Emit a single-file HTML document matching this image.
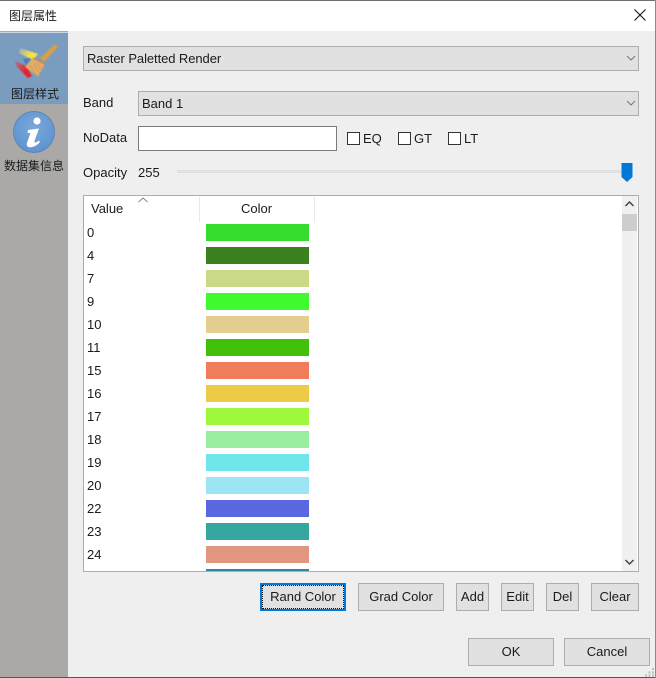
<!DOCTYPE html>
<html><head><meta charset="utf-8"><style>
*{box-sizing:border-box}
html,body{margin:0;padding:0}
body{width:656px;height:678px;position:relative;overflow:hidden;background:#efefef;font-family:"Liberation Sans","Noto Sans CJK SC",sans-serif;font-size:13px;color:#1a1a1a}
.a{position:absolute}
.t{position:absolute;white-space:nowrap;line-height:16px}
.z{font-size:12px}
.cb{position:absolute;background:#e1e1e1;border:1px solid #adadad}
.btn{position:absolute;background:#e1e1e1;border:1px solid #adadad;text-align:center;line-height:26px;top:583px;height:28px}
.chk{position:absolute;width:13px;height:13px;border:1px solid #333;background:#fff;top:132px}
.sw{position:absolute;left:206px;width:103px;height:17px}
.v{position:absolute;left:87px;line-height:16px}
</style></head><body>
<div class="a" style="left:0;top:0;width:656px;height:31px;background:#fff"></div>
<div class="a" style="left:0;top:0;width:656px;height:1px;background:#707070"></div>
<div class="t z" style="left:9px;top:8px">图层属性</div>
<svg class="a" style="left:633px;top:8px" width="14" height="14" viewBox="0 0 14 14"><path d="M1.500 1.500L12.500 12.500M12.500 1.500L1.500 12.500" stroke="#111" stroke-width="1.100" fill="none"/></svg>

<div class="a" style="left:0;top:31px;width:68px;height:647px;background:#aaa9a8"></div>
<div class="a" style="left:0;top:32px;width:68px;height:72px;background:#7a9dbf;border-top:1px solid #c9d6e2"></div>
<svg class="a" style="left:12px;top:40px;filter:blur(.4px)" width="48" height="42" viewBox="0 0 48 42">
<defs><linearGradient id="y" x1="0" y1="0" x2="1" y2="0.5"><stop offset="0" stop-color="#e8e2a0" stop-opacity=".2"/><stop offset=".7" stop-color="#f6e33c"/></linearGradient><linearGradient id="r" x1="0" y1="0" x2="1" y2="0.7"><stop offset="0" stop-color="#e03a3a" stop-opacity=".4"/><stop offset=".7" stop-color="#e8222a"/></linearGradient></defs>
<path d="M8 8L26 14L21 20L7 13Z" fill="url(#y)"/>
<path d="M3 21L14 26L20 36L16 38L5 27Z" fill="url(#r)"/>
<path d="M11 19L19 18L14 25Z" fill="#4a78c4"/>
<path d="M28 18L43 4L46 7L32 22Z" fill="#d6a04a"/>
<path d="M21 18L33 24L26 36.500L13 27Z" fill="#e5ab68"/>
<path d="M21 18L33 24" stroke="#bd8a4c" stroke-width="1.400" fill="none"/>
<path d="M18 25L24 35M22 23L27 33M26 23L29 30" stroke="#cf9558" stroke-width=".8" fill="none"/>
</svg>
<div class="t z" style="left:11px;top:86px">图层样式</div>
<svg class="a" style="left:12px;top:110px" width="44" height="44" viewBox="0 0 44 44">
<defs><radialGradient id="b" cx=".5" cy=".4" r=".6"><stop offset="0" stop-color="#7aa8dc"/><stop offset="1" stop-color="#5f93cf"/></radialGradient></defs>
<circle cx="22" cy="22" r="20.500" fill="url(#b)" stroke="#5c86b6" stroke-width="1"/>
<circle cx="25" cy="11" r="3.600" fill="#fff"/>
<path d="M16 20L27 18.500L22.500 31C22 33 24 33 27 30.500L28 32C24.500 36 20 38 16.500 37C14.500 36.300 14.500 34 15.300 32L18.500 23L15.500 23Z" fill="#fff"/>
</svg>
<div class="t z" style="left:4px;top:158px">数据集信息</div>

<div class="cb" style="left:83px;top:46px;width:556px;height:25px"></div>
<div class="t" style="left:87px;top:51px;letter-spacing:-.08px">Raster Paletted Render</div>
<svg class="a" style="left:626px;top:55px" width="10" height="7" viewBox="0 0 10 7"><path d="M1 1L5 5L9 1" stroke="#777" fill="none"/></svg>

<div class="t" style="left:83px;top:95px">Band</div>
<div class="cb" style="left:138px;top:91px;width:501px;height:25px"></div>
<div class="t" style="left:142px;top:96px">Band 1</div>
<svg class="a" style="left:626px;top:100px" width="10" height="7" viewBox="0 0 10 7"><path d="M1 1L5 5L9 1" stroke="#777" fill="none"/></svg>

<div class="t" style="left:83px;top:130px">NoData</div>
<div class="a" style="left:138px;top:126px;width:199px;height:25px;background:#fff;border:1px solid #7a7a7a"></div>
<div class="chk" style="left:347px"></div><div class="t" style="left:363px;top:131px">EQ</div>
<div class="chk" style="left:398px"></div><div class="t" style="left:414px;top:131px">GT</div>
<div class="chk" style="left:448px"></div><div class="t" style="left:464px;top:131px">LT</div>

<div class="t" style="left:83px;top:165px">Opacity</div>
<div class="t" style="left:138px;top:165px">255</div>
<div class="a" style="left:177px;top:170px;width:449px;height:3px;background:#e6e6e6;border:1px solid #dedede"></div>
<svg class="a" style="left:621px;top:163px" width="12" height="19" viewBox="0 0 12 19"><path d="M.5 0H11.500V14L6 19L.5 14Z" fill="#0078d7"/></svg>

<div class="a" style="left:83px;top:195px;width:556px;height:377px;background:#fff;border:1px solid #adadad"></div>
<div class="a" style="left:199px;top:197px;width:1px;height:25px;background:#e8e8e8"></div>
<div class="a" style="left:314px;top:197px;width:1px;height:25px;background:#e8e8e8"></div>
<svg class="a" style="left:138px;top:197px" width="10" height="6" viewBox="0 0 10 6"><path d="M.5 5L5 1L9.500 5" stroke="#888" fill="none"/></svg>
<div class="t" style="left:91px;top:201px">Value</div>
<div class="t" style="left:241px;top:201px">Color</div>

<div class="a" style="left:622px;top:196px;width:15px;height:375px;background:#f0f0f0"></div>
<svg class="a" style="left:622px;top:199px" width="15" height="10" viewBox="0 0 15 10"><path d="M3.500 7L7.500 3L11.500 7" stroke="#444" stroke-width="1.500" fill="none"/></svg>
<div class="a" style="left:622px;top:214px;width:15px;height:17px;background:#cdcdcd"></div>
<svg class="a" style="left:622px;top:557px" width="15" height="10" viewBox="0 0 15 10"><path d="M3.500 3L7.500 7L11.500 3" stroke="#444" stroke-width="1.500" fill="none"/></svg>

<div class="v" style="top:225px">0</div><div class="sw" style="top:224px;background:#36dd2f"></div>
<div class="v" style="top:248px">4</div><div class="sw" style="top:247px;background:#3a8220"></div>
<div class="v" style="top:271px">7</div><div class="sw" style="top:270px;background:#c9d985"></div>
<div class="v" style="top:294px">9</div><div class="sw" style="top:293px;background:#41f92f"></div>
<div class="v" style="top:317px">10</div><div class="sw" style="top:316px;background:#e3cd8f"></div>
<div class="v" style="top:340px">11</div><div class="sw" style="top:339px;background:#40c00a"></div>
<div class="v" style="top:363px">15</div><div class="sw" style="top:362px;background:#f17c5b"></div>
<div class="v" style="top:386px">16</div><div class="sw" style="top:385px;background:#eecb45"></div>
<div class="v" style="top:409px">17</div><div class="sw" style="top:408px;background:#9ef93c"></div>
<div class="v" style="top:432px">18</div><div class="sw" style="top:431px;background:#98ee9e"></div>
<div class="v" style="top:455px">19</div><div class="sw" style="top:454px;background:#6fe6ea"></div>
<div class="v" style="top:478px">20</div><div class="sw" style="top:477px;background:#9de5f3"></div>
<div class="v" style="top:501px">22</div><div class="sw" style="top:500px;background:#5a68e0"></div>
<div class="v" style="top:524px">23</div><div class="sw" style="top:523px;background:#35a7a0"></div>
<div class="v" style="top:547px">24</div><div class="sw" style="top:546px;background:#e09680"></div>
<div class="a" style="left:206px;top:569px;width:103px;height:2px;background:#2a8aa0"></div>

<div class="btn" style="left:260px;width:86px;border:2px solid #0078d7;line-height:24px">Rand Color</div>
<div class="a" style="left:262px;top:585px;width:82px;height:24px;border:1px dotted #111"></div>
<div class="btn" style="left:358px;width:86px">Grad Color</div>
<div class="btn" style="left:456px;width:33px">Add</div>
<div class="btn" style="left:501px;width:33px">Edit</div>
<div class="btn" style="left:546px;width:33px">Del</div>
<div class="btn" style="left:591px;width:48px">Clear</div>
<div class="btn" style="left:468px;width:86px;top:638px">OK</div>
<div class="btn" style="left:564px;width:86px;top:638px">Cancel</div>

<svg class="a" style="left:644px;top:666px" width="11" height="11" viewBox="0 0 11 11"><path d="M8 2h2v2h-2zM4.500 5.500h2v2h-2zM8 5.500h2v2h-2zM1 8.500h2v2h-2zM4.500 8.500h2v2h-2zM8 8.500h2v2h-2z" fill="#bdbdbd"/></svg>
<div class="a" style="left:0;top:677px;width:656px;height:1px;background:#555"></div>
<div class="a" style="left:655px;top:0;width:1px;height:678px;background:#8a8a8a"></div>
</body></html>
